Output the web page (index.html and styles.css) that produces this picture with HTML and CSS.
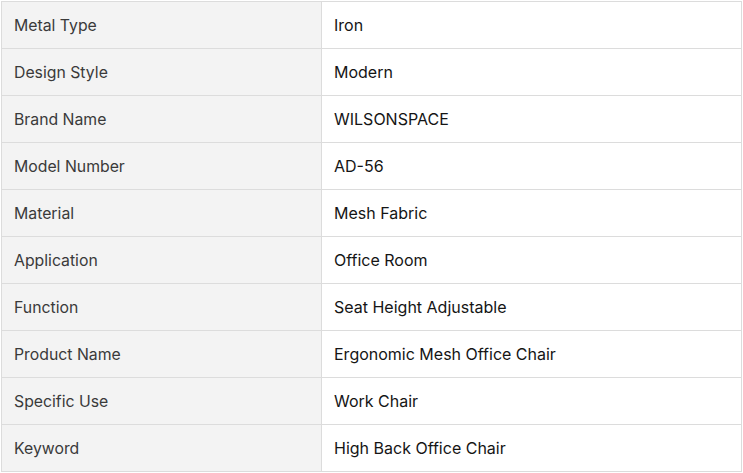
FILE: index.html
```html
<!DOCTYPE html>
<html>
<head>
<meta charset="utf-8">
<link rel="stylesheet" href="styles.css">
</head>
<body>
<div class="wrap">
<table class="specs">
<tbody>
<tr><th>Metal Type</th><td>Iron</td></tr>
<tr><th>Design Style</th><td>Modern</td></tr>
<tr><th>Brand Name</th><td>WILSONSPACE</td></tr>
<tr><th>Model Number</th><td>AD-56</td></tr>
<tr><th>Material</th><td>Mesh Fabric</td></tr>
<tr><th>Application</th><td>Office Room</td></tr>
<tr><th>Function</th><td>Seat Height Adjustable</td></tr>
<tr><th>Product Name</th><td>Ergonomic Mesh Office Chair</td></tr>
<tr><th>Specific Use</th><td>Work Chair</td></tr>
<tr><th>Keyword</th><td>High Back Office Chair</td></tr>
</tbody>
</table>
</div>
</body>
</html>
```

FILE: styles.css
```css
html, body {
  margin: 0;
  padding: 0;
  background: #fff;
}
.wrap {
  padding: 1px;
}
.specs {
  width: 741px;
  border-collapse: collapse;
  font-family: Inter, "Noto Sans", sans-serif;
  font-size: 16px;
}
.specs th,
.specs td {
  border: 1px solid #dcdcdc;
  height: 47px;
  padding: 0 12px;
  text-align: left;
  font-weight: 400;
  box-sizing: border-box;
}
.specs th {
  width: 320px;
  background: #f3f3f3;
  color: #3a3a3a;
  font-size: 15.8px;
}
.specs td {
  background: #fff;
  color: #151515;
}
```
